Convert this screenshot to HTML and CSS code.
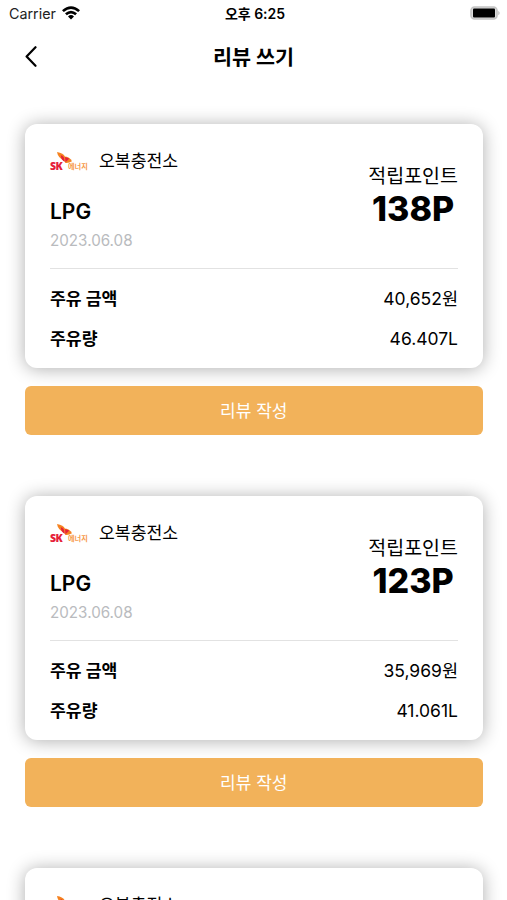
FILE: index.html
```html
<!DOCTYPE html>
<html lang="ko">
<head>
<meta charset="utf-8">
<title>리뷰 쓰기</title>
<link rel="stylesheet" href="styles.css">
</head>
<body>
<div class="status">
  <div class="carrier">Carrier
    <svg width="18" height="14" viewBox="0 0 18 14"><path d="M0 4.2Q9-3.8 18 4.2L16.2 6.1Q9-.1 1.8 6.1ZM3 7.3Q9 2.2 15 7.3L13.2 9.2Q9 5.6 4.8 9.2ZM6 10.4Q9 7.8 12 10.4L9 13.5Z"/></svg>
  </div>
  <div class="time">오후 6:25</div>
  <svg class="battery" width="31" height="14" viewBox="0 0 31 14"><rect x="1" y="1" width="26" height="12" rx="3.5" fill="#ddd" stroke="#c4c4c4" stroke-width="1.6"/><rect x="3" y="2.5" width="22" height="9" rx="1"/><path d="M28.3 4.7Q31 7 28.3 9.3Z" fill="#bbb"/></svg>
</div>
<header class="nav">
  <svg class="back" width="14" height="22" viewBox="0 0 14 22"><path d="M10.5 1.2L1.6 10.5L10.5 19.8"/></svg>
  <h1>리뷰 쓰기</h1>
</header>
<main>
  <section class="entry">
    <article class="card">
      <div class="top">
        <div class="info">
          <div class="station">
            <div class="logo"><span class="logo-sk">SK</span><svg class="wings" viewBox="0 0 14 11"><path fill="#f58220" d="M0 0Q6 1 7.5 4.5L7 8Q1 6 0 0Z"/><path fill="#e5203a" d="M3.5 3Q7 3.5 7.5 9Q4 8 3.5 3Z"/><path fill="#f58220" d="M6.5 4Q12 4 14 8.5Q11 10.5 7.5 10Z"/><path fill="#e5203a" d="M7.5 4.5L11.5 6L8 9.5Z"/></svg><span class="logo-ko">에너지</span></div>
            <span>오복충전소</span>
          </div>
          <div class="fuel">LPG</div>
          <div class="date">2023.06.08</div>
        </div>
        <div class="points"><div class="label">적립포인트</div><div class="value">138P</div></div>
      </div>
      <div class="row"><b>주유 금액</b><span>40,652원</span></div>
      <div class="row"><b>주유량</b><span>46.407L</span></div>
    </article>
    <button class="write">리뷰 작성</button>
  </section>
  <section class="entry">
    <article class="card">
      <div class="top">
        <div class="info">
          <div class="station">
            <div class="logo"><span class="logo-sk">SK</span><svg class="wings" viewBox="0 0 14 11"><path fill="#f58220" d="M0 0Q6 1 7.5 4.5L7 8Q1 6 0 0Z"/><path fill="#e5203a" d="M3.5 3Q7 3.5 7.5 9Q4 8 3.5 3Z"/><path fill="#f58220" d="M6.5 4Q12 4 14 8.5Q11 10.5 7.5 10Z"/><path fill="#e5203a" d="M7.5 4.5L11.5 6L8 9.5Z"/></svg><span class="logo-ko">에너지</span></div>
            <span>오복충전소</span>
          </div>
          <div class="fuel">LPG</div>
          <div class="date">2023.06.08</div>
        </div>
        <div class="points"><div class="label">적립포인트</div><div class="value">123P</div></div>
      </div>
      <div class="row"><b>주유 금액</b><span>35,969원</span></div>
      <div class="row"><b>주유량</b><span>41.061L</span></div>
    </article>
    <button class="write">리뷰 작성</button>
  </section>
  <section class="entry last">
    <article class="card">
      <div class="station">
        <div class="logo"><svg class="wings" viewBox="0 0 14 11"><path fill="#f58220" d="M0 0Q6 1 7.5 4.5L7 8Q1 6 0 0Z"/><path fill="#e5203a" d="M3.5 3Q7 3.5 7.5 9Q4 8 3.5 3Z"/></svg></div>
        <span>오복충전소</span>
      </div>
    </article>
  </section>
</main>
</body>
</html>
```

FILE: styles.css
```css
* { box-sizing: border-box; }
body { margin: 0; height: 900px; overflow: hidden; background: #fff; color: #000; font-family: Inter, "Noto Sans CJK KR", sans-serif; }
.status { height: 28px; padding: 0 6px 0 9px; display: grid; grid-template-columns: 1fr auto 1fr; align-items: center; font-size: 14.3px; line-height: 28px; }
.carrier { display: flex; align-items: center; gap: 6px; color: #222; }
.carrier svg { margin-top: -2px; fill: #000; }
.time { font-size: 14px; font-weight: 600; }
.battery { justify-self: end; margin-top: -2px; }
.nav { height: 58px; padding: 0 25px; display: grid; grid-template-columns: 14px 1fr 14px; align-items: center; }
.back { fill: none; stroke: #000; stroke-width: 2.2; stroke-linecap: round; stroke-linejoin: round; }
h1 { margin: 2px 0 0; text-align: center; font-size: 20.7px; line-height: 56px; font-weight: 700; }
main { padding: 38px 24.5px 0 25px; }
.entry { height: 372px; }
.entry.last, .last .card { height: 32px; }
.last .card { border-radius: 12px 12px 0 0; }
.card { height: 244px; padding: 25px 24.5px 25px 25px; border-radius: 12px; background: #fff; box-shadow: 0 1px 18px rgba(0,0,0,.32); }
.top { height: 120px; display: flex; justify-content: space-between; border-bottom: 1px solid #e2e2e2; margin-bottom: 10px; }
.station { height: 24px; display: flex; align-items: center; gap: 11px; font-size: 17.2px; line-height: 26px; }
.logo { width: 38px; height: 19px; display: grid; grid-template-columns: 7px 6px 5px 20px; grid-template-rows: 11px 8px; line-height: 8px; white-space: nowrap; }
.logo-sk { grid-area: 2 / 1; margin-top: -2px; font: 800 10.5px/10px "Open Sans", sans-serif; color: #e5203a; letter-spacing: -.5px; }
.wings { grid-area: 1 / 2 / 2 / 5; width: 15px; height: 12px; }
.logo-ko { grid-area: 2 / 4; font: 700 7.2px/7px "Noto Sans CJK KR", sans-serif; color: #f79a4a; }
.fuel { margin-top: 25px; font-size: 21px; line-height: 28px; font-weight: 600; }
.date { margin-top: 3px; font-size: 15.2px; line-height: 24px; color: #b9bbbe; }
.points { padding-top: 12px; text-align: center; }
.label { font-size: 19.5px; line-height: 30px; }
.value { font-size: 34px; line-height: 36px; font-weight: 800; }
.row { height: 40px; display: flex; justify-content: space-between; align-items: center; font-size: 17.5px; line-height: 40px; }
.row b { font-size: 17.2px; font-weight: 700; }
.write { display: block; width: 100%; height: 49px; margin-top: 18px; padding: 2px 0 0; border: 0; border-radius: 6px; background: #f2b25a; color: #fff; font: 17px/47px Inter, "Noto Sans CJK KR", sans-serif; }
```
